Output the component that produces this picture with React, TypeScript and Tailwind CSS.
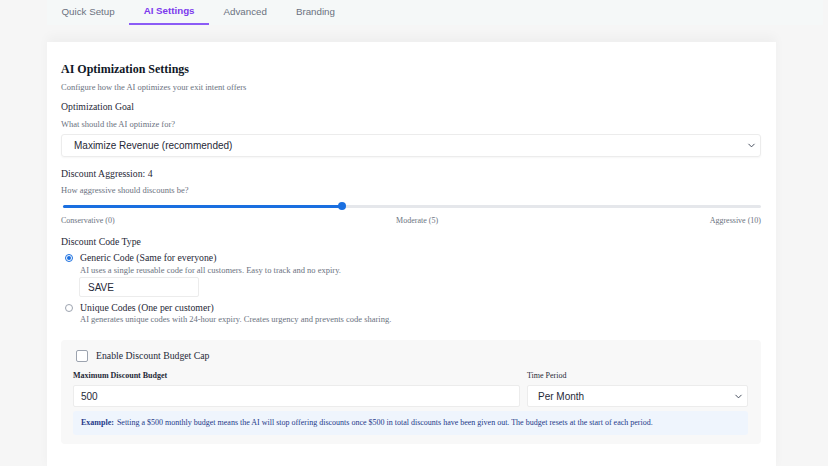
import { ChevronDown } from 'lucide-react';

const tabs = ['Quick Setup', 'AI Settings', 'Advanced', 'Branding'];
const serif = "font-['Liberation_Serif',serif]";
const sans = "font-['Liberation_Sans',Arial,sans-serif]";

export default function App() {
  const value = 4;
  const pct = (value / 10) * 100;

  return (
    <div className="w-[828px] h-[466px] overflow-hidden bg-[#f6f6f6] pl-[47px]">
      {/* Tabs */}
      <div className={`flex h-[25px] w-[776px] bg-[#f5f8f8] ${sans}`}>
        {tabs.map((t) => (
          <div
            key={t}
            className={`flex h-full items-center px-[14.5px] text-[9.75px] ${
              t === 'AI Settings'
                ? 'border-b-2 border-[#8b5cf6] font-semibold text-[#7c3aed]'
                : 'text-[#6b7280]'
            }`}
          >
            {t}
          </div>
        ))}
      </div>

      {/* Card */}
      <div className={`mt-[17px] h-[430px] w-[729px] bg-white px-[14px] pt-[20px] shadow-[0_-6px_10px_rgba(0,0,0,0.03)] ${serif}`}>
        <h2 className="text-[12px] font-bold leading-[15px] text-[#111827]">AI Optimization Settings</h2>
        <p className="mt-[5px] text-[8.5px] leading-[10px] text-[#6b7280]">Configure how the AI optimizes your exit intent offers</p>

        <div className="mt-[9px] text-[9.75px] leading-[12px] text-[#1f2937]">Optimization Goal</div>
        <p className="mt-[6px] text-[8.5px] leading-[10px] text-[#6b7280]">What should the AI optimize for?</p>
        <div className={`mt-[5px] flex h-[23px] w-[700px] items-center justify-between rounded-[3px] border border-[#ececec] pl-[12px] pr-[3px] shadow-[0_1px_2px_rgba(0,0,0,0.04)] ${sans}`}>
          <span className="text-[10px] text-[#1f2937]">Maximize Revenue (recommended)</span>
          <ChevronDown className="h-[11px] w-[11px] text-[#374151]" strokeWidth={2} />
        </div>

        <div className="mt-[11px] text-[9.75px] leading-[12px] text-[#1f2937]">Discount Aggression: {value}</div>
        <p className="mt-[5px] text-[8.5px] leading-[10px] text-[#6b7280]">How aggressive should discounts be?</p>
        <div className="relative mt-[6px] ml-[2px] h-[10px] w-[698px]">
          <div className="absolute left-0 right-0 top-[3.5px] h-[3px] rounded-full bg-[#e5e7eb]" />
          <div className="absolute left-0 top-[3.5px] h-[3px] rounded-full bg-[#1a6fe0]" style={{ width: `${pct}%` }} />
          <div
            className="absolute top-[1px] h-[8px] w-[8px] -translate-x-1/2 rounded-full bg-[#1a6fe0]"
            style={{ left: `${pct}%` }}
          />
        </div>
        <div className="mt-[5px] flex w-[700px] justify-between text-[8px] leading-[10px] text-[#6b7280]">
          <span>Conservative (0)</span>
          <span className="ml-[10px]">Moderate (5)</span>
          <span>Aggressive (10)</span>
        </div>

        <div className="mt-[10px] text-[9.75px] leading-[12px] text-[#1f2937]">Discount Code Type</div>
        <div className="mt-[4px] flex items-center pl-[4px]">
          <span className="flex h-[8px] w-[8px] items-center justify-center rounded-full border border-[#1a6fe0] bg-white">
            <span className="h-[4px] w-[4px] rounded-full bg-[#1a6fe0]" />
          </span>
          <span className="ml-[7px] text-[9.75px] leading-[12px] text-[#1f2937]">Generic Code (Same for everyone)</span>
        </div>
        <p className="mt-[1px] pl-[19px] text-[8.5px] leading-[10px] text-[#6b7280]">AI uses a single reusable code for all customers. Easy to track and no expiry.</p>
        <div className={`mt-[2px] ml-[18px] flex h-[20px] w-[120px] items-center rounded-[2px] border border-[#ececec] px-[8px] text-[10px] text-[#1f2937] ${sans}`}>SAVE</div>
        <div className="mt-[4.5px] flex items-center pl-[4px]">
          <span className="h-[8px] w-[8px] rounded-full border border-[#9ca3af] bg-white" />
          <span className="ml-[7px] text-[9.75px] leading-[12px] text-[#1f2937]">Unique Codes (One per customer)</span>
        </div>
        <p className="mt-[0.5px] pl-[19px] text-[8.5px] leading-[10px] text-[#6b7280]">AI generates unique codes with 24-hour expiry. Creates urgency and prevents code sharing.</p>

        {/* Budget cap box */}
        <div className="mt-[16px] h-[104px] w-[700px] rounded-[4px] bg-[#f8f8f8] pl-[12px] pr-[13px] pt-[10px]">
          <div className="flex items-center pl-[3px]">
            <span className="h-[12px] w-[12px] rounded-[2px] border border-[#9ca3af] bg-white" />
            <span className="ml-[8px] text-[9.75px] leading-[12px] text-[#1f2937]">Enable Discount Budget Cap</span>
          </div>
          <div className="mt-[9px] flex gap-[7px]">
            <div className="flex-1">
              <div className="text-[8px] font-semibold leading-[10px] text-[#1f2937]">Maximum Discount Budget</div>
              <div className={`mt-[4px] flex h-[22px] items-center rounded-[2px] border border-[#ececec] bg-white px-[7px] text-[10px] text-[#1f2937] ${sans}`}>500</div>
            </div>
            <div className="w-[221px]">
              <div className="text-[8px] leading-[10px] text-[#1f2937]">Time Period</div>
              <div className={`mt-[4px] flex h-[22px] items-center justify-between rounded-[2px] border border-[#ececec] bg-white pl-[10px] pr-[3px] ${sans}`}>
                <span className="text-[10px] text-[#1f2937]">Per Month</span>
                <ChevronDown className="h-[11px] w-[11px] text-[#374151]" strokeWidth={2} />
              </div>
            </div>
          </div>
          <div className="mt-[4px] flex h-[24px] items-center rounded-[3px] bg-[#eff5fd] px-[8px] text-[8px] leading-[10px] text-[#1e3a8a]">
            <span className="font-bold">Example:</span>
            <span className="ml-[3px]">Setting a $500 monthly budget means the AI will stop offering discounts once $500 in total discounts have been given out. The budget resets at the start of each period.</span>
          </div>
        </div>
      </div>
    </div>
  );
}
